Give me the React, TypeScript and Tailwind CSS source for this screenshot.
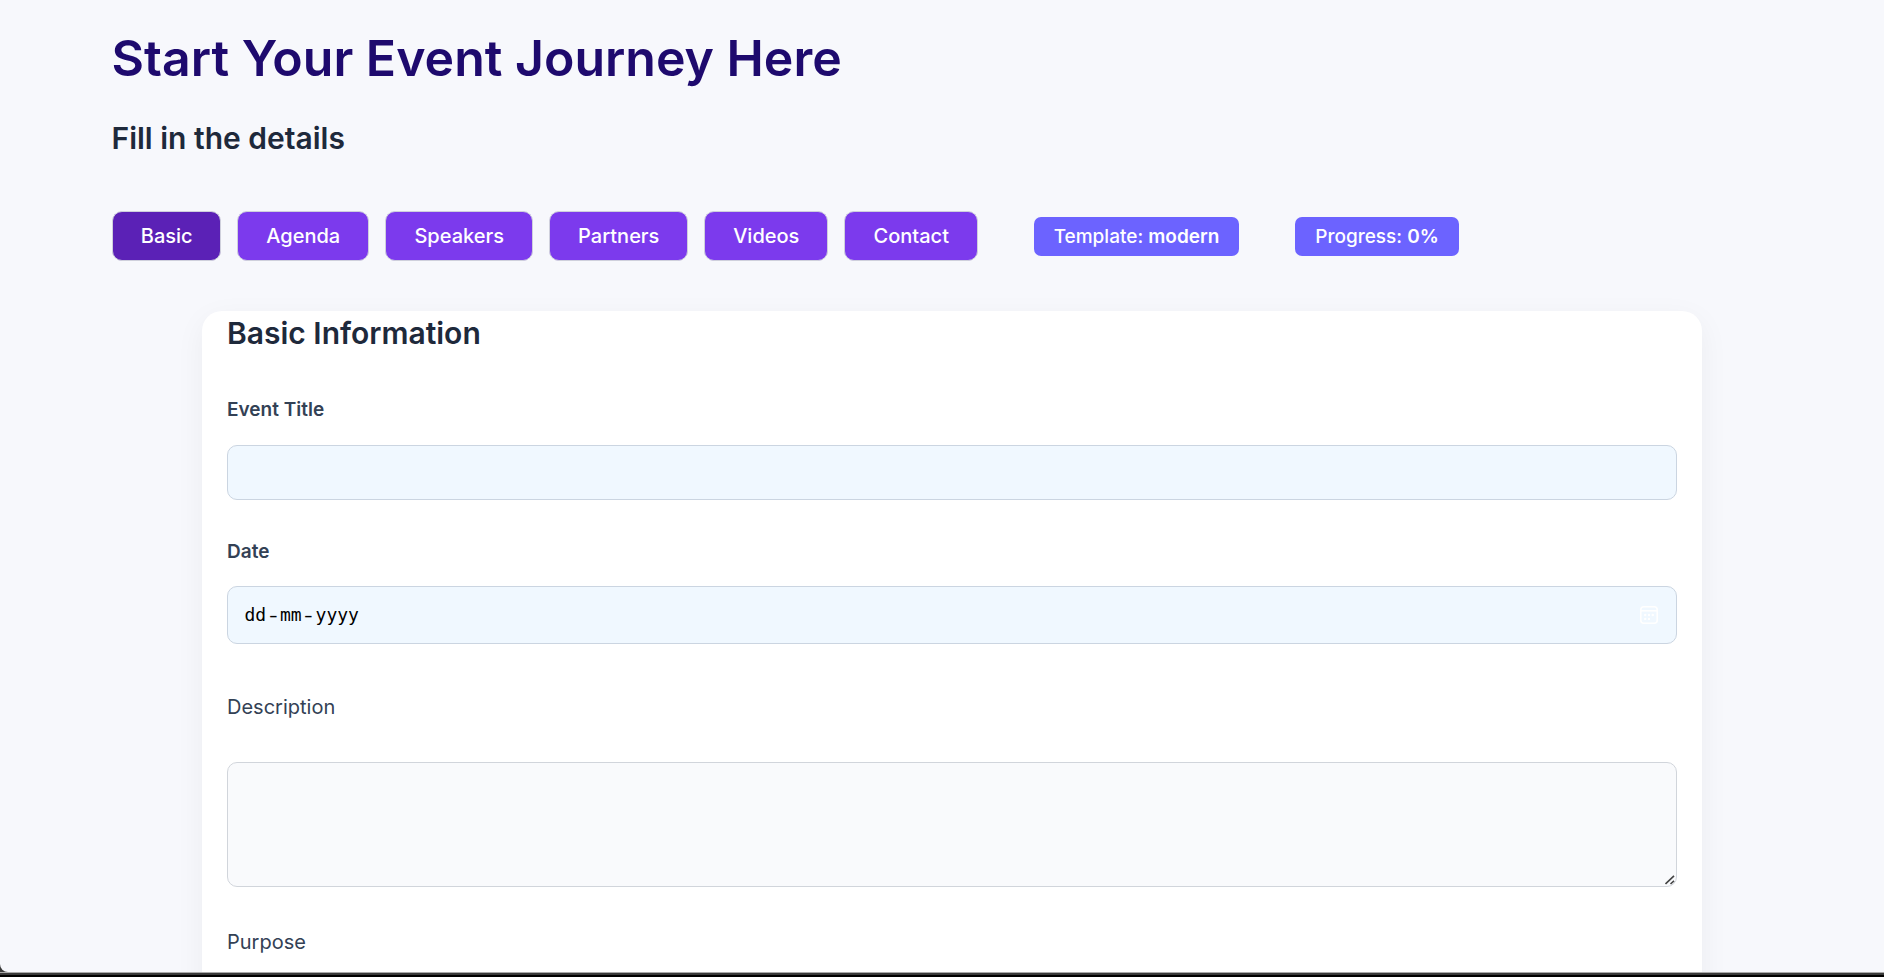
import React from "react";

const tabs = [
  { label: "Basic", box: "w-[108.5px] bg-[#5b21b6]" },
  { label: "Agenda", box: "w-[131.5px] bg-[#7c3aed]" },
  { label: "Speakers", box: "w-[147.5px] bg-[#7c3aed]" },
  { label: "Partners", box: "w-[138.5px] bg-[#7c3aed]" },
  { label: "Videos", box: "w-[123.5px] bg-[#7c3aed]" },
  { label: "Contact", box: "w-[133.5px] bg-[#7c3aed]" },
];

function Tabs() {
  return (
    <nav className="flex gap-[16.5px]">
      {tabs.map((tab) => (
        <button
          key={tab.label}
          className={`flex h-[50px] items-center justify-center rounded-[10px] border border-[#cfd0dc] pl-[1px] text-[20px] font-medium text-white ${tab.box}`}
        >
          {tab.label}
        </button>
      ))}
    </nav>
  );
}

function CalendarIcon() {
  return (
    <svg width="18" height="18" viewBox="0 0 18 18" fill="none" stroke="#fff" strokeWidth="1.6">
      <rect x="0.8" y="0.8" width="16.4" height="16.4" rx="3" />
      <path d="M1 4.8h16" />
      <g fill="#fff" stroke="none">
        <circle cx="5.2" cy="9" r="1.2" />
        <circle cx="9" cy="9" r="1.2" />
        <circle cx="12.8" cy="9" r="1.2" />
        <circle cx="5.2" cy="12.9" r="1.2" />
        <circle cx="9" cy="12.9" r="1.2" />
      </g>
    </svg>
  );
}

export default function App() {
  return (
    <div className="flex h-[977px] flex-col overflow-hidden bg-[#3a3a3a] font-['Inter',sans-serif] text-[#1e293b]">
      <main className="h-[972px] overflow-hidden rounded-bl-[8px] bg-[#f7f8fc]">
        <header className="pl-[111.5px] pt-[28px]">
          <h1 className="h-[60px] whitespace-nowrap text-[50px] font-semibold leading-[60px] text-[#1e0a6e]">
            Start Your Event Journey Here
          </h1>
          <h2 className="mt-[30px] h-[40px] whitespace-nowrap text-[30px] font-semibold leading-[40px]">
            Fill in the details
          </h2>
        </header>
        <div className="mt-[53px] flex items-center pl-[112px]">
          <Tabs />
          <span className="ml-[56px] flex h-[39px] w-[205px] items-center justify-center whitespace-pre rounded-[7px] bg-[#6c63ff] pl-[1px] pt-[2px] text-[19px] font-medium text-white">
            Template: <strong className="font-semibold">modern</strong>
          </span>
          <span className="ml-[56px] flex h-[39px] w-[164px] items-center justify-center whitespace-pre rounded-[7px] bg-[#6c63ff] pl-[1px] pt-[2px] text-[19px] font-medium text-white">
            Progress: <strong className="font-semibold">0%</strong>
          </span>
        </div>
        <section className="ml-[202px] mt-[50px] flex h-[700px] w-[1500px] flex-col rounded-[20px] bg-white px-[25px] shadow-[0_8px_30px_rgba(0,0,0,0.05)]">
          <h2 className="mt-[2px] h-[40px] text-[30px] font-semibold leading-[40px]">Basic Information</h2>
          <label className="mt-[45px] h-[24px] text-[19px] font-semibold leading-[24px] text-[#334155]">
            Event Title
          </label>
          <input className="mt-[23px] h-[55px] shrink-0 rounded-[10px] border border-[#cbd5e1] bg-[#f0f8ff]" />
          <label className="mt-[40px] h-[24px] text-[19px] font-semibold leading-[24px] text-[#334155]">Date</label>
          <div className="mt-[22px] flex h-[58px] shrink-0 items-center justify-between rounded-[10px] border border-[#cbd5e1] bg-[#f0f8ff] pl-[16.5px] pr-[18px]">
            <span className="pb-[2px] font-['DejaVu_Sans_Mono',monospace] text-[18px] text-black">
              dd<span className="mx-[1.5px] inline-block scale-x-[1.4]">-</span>mm
              <span className="mx-[1.5px] inline-block scale-x-[1.4]">-</span>yyyy
            </span>
            <CalendarIcon />
          </div>
          <label className="mt-[51px] h-[24px] text-[20px] leading-[24px] text-[#334155]">Description</label>
          <div className="relative mt-[43px] flex shrink-0">
            <textarea className="h-[125px] w-full resize-none rounded-[10px] border border-[#d1d5db] bg-[#f9fafc]" />
            <svg className="absolute bottom-[2px] right-[2px]" width="10" height="10" viewBox="0 0 10 10" stroke="#444" strokeWidth="1.6">
              <path d="M0.5 9 9 0.8M5.5 9 9 5.8" />
            </svg>
          </div>
          <label className="mt-[43px] h-[24px] text-[20px] leading-[24px] text-[#334155]">Purpose</label>
        </section>
      </main>
      <div className="h-[5px] border-b-2 border-t border-b-black border-t-[#aaaaaa] bg-[#3a3a3a]" />
    </div>
  );
}
